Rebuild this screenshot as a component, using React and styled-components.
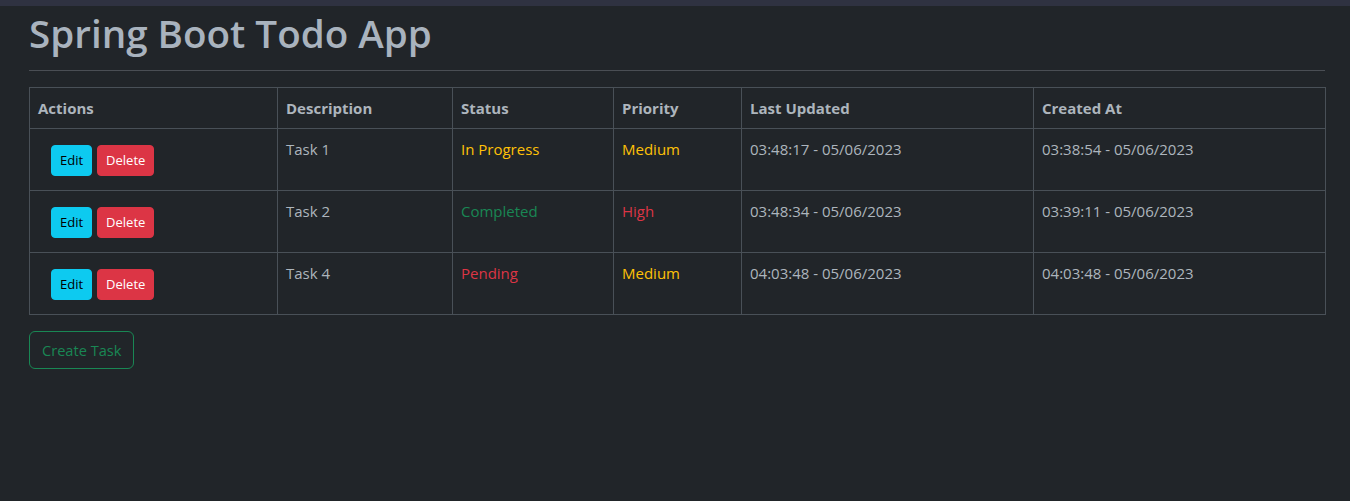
import React from 'react'
import styled, { createGlobalStyle } from 'styled-components'

const GlobalStyle = createGlobalStyle`
  html, body {
    margin: 0;
    padding: 0;
    background: #212529;
  }
  body {
    font-family: "Open Sans", "Noto Sans", sans-serif;
    color: #adb5bd;
  }
`

const Page = styled.div`
  min-height: 501px;
  background: #212529;
  border-top: 6px solid #2f3241;
  box-sizing: border-box;
`

const Container = styled.div`
  width: 1296px;
  margin-left: 29px;
`

const Title = styled.h1`
  margin: 0;
  padding-top: 3px;
  padding-bottom: 6px;
  font-size: 38.6px;
  font-weight: 600;
  line-height: 48px;
  color: #a9b3be;
`

const Rule = styled.hr`
  margin: 7px 0 16px 0;
  border: none;
  border-top: 1px solid #4a4e54;
`

const Table = styled.table`
  width: 100%;
  border-collapse: collapse;
  table-layout: fixed;
`

const Th = styled.th`
  text-align: left;
  font-size: 15px;
  font-weight: 700;
  padding: 8px;
  height: 24px;
  border: 1px solid #495057;
  color: #adb5bd;
`

const Td = styled.td`
  vertical-align: top;
  font-size: 15px;
  line-height: 24px;
  padding: 8px;
  height: 45px;
  border: 1px solid #495057;
  color: ${p => p.$color || '#adb5bd'};
`

const Actions = styled.div`
  display: flex;
  gap: 5px;
  margin: 8px 0 0 13px;
`

const SmallButton = styled.button`
  font-family: inherit;
  font-size: 13px;
  line-height: 21px;
  padding: 4px 8px;
  border: 1px solid ${p => p.$bg};
  border-radius: 4px;
  background: ${p => p.$bg};
  color: ${p => p.$fg};
  cursor: pointer;
`

const OutlineButton = styled.button`
  margin-top: 16px;
  font-family: inherit;
  font-size: 14.6px;
  line-height: 24px;
  padding: 6px 12px;
  border: 1px solid #198754;
  border-radius: 6px;
  background: transparent;
  color: #198754;
  cursor: pointer;
`

const statusColor = {
  'In Progress': '#ffc107',
  Completed: '#198754',
  Pending: '#dc3545',
}

const priorityColor = {
  Medium: '#ffc107',
  High: '#dc3545',
  Low: '#198754',
}

const tasks = [
  { id: 1, description: 'Task 1', status: 'In Progress', priority: 'Medium', updated: '03:48:17 - 05/06/2023', created: '03:38:54 - 05/06/2023' },
  { id: 2, description: 'Task 2', status: 'Completed', priority: 'High', updated: '03:48:34 - 05/06/2023', created: '03:39:11 - 05/06/2023' },
  { id: 4, description: 'Task 4', status: 'Pending', priority: 'Medium', updated: '04:03:48 - 05/06/2023', created: '04:03:48 - 05/06/2023' },
]

export default function App() {
  return (
    <Page>
      <GlobalStyle />
      <Container>
        <Title>Spring Boot Todo App</Title>
        <Rule />
        <Table>
          <colgroup>
            <col style={{ width: '248px' }} />
            <col style={{ width: '175px' }} />
            <col style={{ width: '161px' }} />
            <col style={{ width: '128px' }} />
            <col style={{ width: '292px' }} />
            <col style={{ width: '292px' }} />
          </colgroup>
          <thead>
            <tr>
              <Th>Actions</Th>
              <Th>Description</Th>
              <Th>Status</Th>
              <Th>Priority</Th>
              <Th>Last Updated</Th>
              <Th>Created At</Th>
            </tr>
          </thead>
          <tbody>
            {tasks.map(task => (
              <tr key={task.id}>
                <Td>
                  <Actions>
                    <SmallButton $bg="#0dcaf0" $fg="#000">Edit</SmallButton>
                    <SmallButton $bg="#dc3545" $fg="#fff">Delete</SmallButton>
                  </Actions>
                </Td>
                <Td>{task.description}</Td>
                <Td $color={statusColor[task.status]}>{task.status}</Td>
                <Td $color={priorityColor[task.priority]}>{task.priority}</Td>
                <Td>{task.updated}</Td>
                <Td>{task.created}</Td>
              </tr>
            ))}
          </tbody>
        </Table>
        <OutlineButton>Create Task</OutlineButton>
      </Container>
    </Page>
  )
}
